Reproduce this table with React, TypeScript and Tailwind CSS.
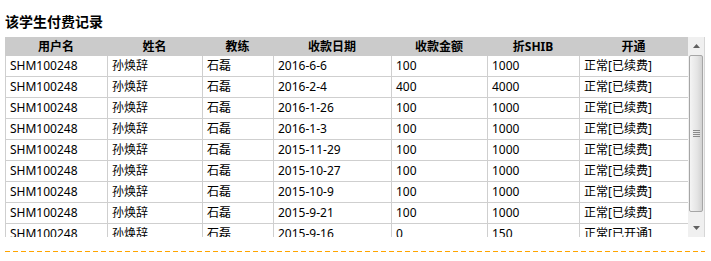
const cols = ['用户名', '姓名', '教练', '收款日期', '收款金额', '折SHIB', '开通']

const rows = [
  ['SHM100248', '孙焕辞', '石磊', '2016-6-6', '100', '1000', '正常[已续费]'],
  ['SHM100248', '孙焕辞', '石磊', '2016-2-4', '400', '4000', '正常[已续费]'],
  ['SHM100248', '孙焕辞', '石磊', '2016-1-26', '100', '1000', '正常[已续费]'],
  ['SHM100248', '孙焕辞', '石磊', '2016-1-3', '100', '1000', '正常[已续费]'],
  ['SHM100248', '孙焕辞', '石磊', '2015-11-29', '100', '1000', '正常[已续费]'],
  ['SHM100248', '孙焕辞', '石磊', '2015-10-27', '100', '1000', '正常[已续费]'],
  ['SHM100248', '孙焕辞', '石磊', '2015-10-9', '100', '1000', '正常[已续费]'],
  ['SHM100248', '孙焕辞', '石磊', '2015-9-21', '100', '1000', '正常[已续费]'],
  ['SHM100248', '孙焕辞', '石磊', '2015-9-16', '0', '150', '正常[已开通]'],
  ['SHM100248', '孙焕辞', '石磊', '2015-9-1', '0', '150', '正常[已开通]'],
]

const grid = 'grid grid-cols-[102px_95px_71px_118px_96px_92px_109px]'

function ScrollBar() {
  return (
    <div className="w-[17px] h-full flex flex-col bg-[#f0f0f0] border-r border-[#d6d6d6]">
      <div className="h-[18px] flex items-center justify-center">
        <svg width="7" height="4" viewBox="0 0 7 4">
          <path d="M0 4 L3.5 0 L7 4 Z" fill="#606060" />
        </svg>
      </div>
      <div className="mx-[1px] h-[157px] rounded-[2px] border border-[#a6a6a6] bg-[linear-gradient(to_right,#f4f4f4,#e4e4e4_60%,#d2d2d2)] flex items-center justify-center">
        <div className="flex flex-col gap-[1px]">
          <div className="w-[7px] h-px bg-[#8a8a8a]" />
          <div className="w-[7px] h-px bg-[#8a8a8a]" />
          <div className="w-[7px] h-px bg-[#8a8a8a]" />
          <div className="w-[7px] h-px bg-[#8a8a8a]" />
        </div>
      </div>
      <div className="flex-1" />
      <div className="h-[18px] flex items-center justify-center">
        <svg width="7" height="4" viewBox="0 0 7 4">
          <path d="M0 0 L3.5 4 L7 0 Z" fill="#606060" />
        </svg>
      </div>
    </div>
  )
}

export default function App() {
  return (
    <div
      className="w-[711px] h-[261px] bg-white px-[5px] text-black overflow-hidden"
      style={{ fontFamily: '"Noto Sans", "Noto Sans CJK SC", sans-serif' }}
    >
      <div className="pt-[12px] text-[14px] leading-[20px] font-bold">该学生付费记录</div>
      <div className="mt-[5px] w-[700px] h-[200px] flex">
        <div className="w-[683px] h-full overflow-hidden">
          <div className={`${grid} h-[19px] bg-[#cbcbcb]`}>
            {cols.map((c) => (
              <div key={c} className="text-center text-[12px] leading-[19px] font-bold">
                {c}
              </div>
            ))}
          </div>
          {rows.map((r, i) => (
            <div key={i} className={`${grid} border-b border-[#cfcfcf]`}>
              {r.map((v, j) => (
                <div key={j} className="h-[20px] border-l border-[#cfcfcf] pl-[4px] text-[12px] leading-[20px] whitespace-nowrap overflow-hidden">
                  {v}
                </div>
              ))}
            </div>
          ))}
        </div>
        <ScrollBar />
      </div>
      <svg className="mt-[14px] block" width="700" height="1" viewBox="0 0 700 1">
        <line x1="0" y1="0.5" x2="700" y2="0.5" stroke="#ffa500" strokeWidth="1" strokeDasharray="5 3" />
      </svg>
    </div>
  )
}
